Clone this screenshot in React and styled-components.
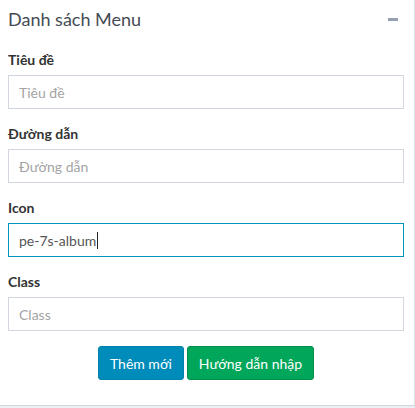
import React from "react";
import styled, { createGlobalStyle } from "styled-components";

const Global = createGlobalStyle`
  html, body { margin: 0; padding: 0; background: #ecf0f5; }
  body { font-family: "Lato", "Liberation Sans", sans-serif; }
  * { box-sizing: border-box; }
`;

const Panel = styled.div`
  width: 415px;
  background: #fff;
  border-right: 1px solid #dfe3e8;
  border-bottom: 1px solid #d2d6de;
  padding-bottom: 25px;
`;

const Header = styled.div`
  height: 44px;
  display: flex;
  align-items: flex-start;
  justify-content: space-between;
  padding: 8px 16px 0 8px;
`;

const Title = styled.h3`
  margin: 0;
  font-size: 18px;
  line-height: 22px;
  font-weight: 400;
  color: #444b55;
`;

const Collapse = styled.span`
  display: block;
  width: 10px;
  height: 3px;
  margin-top: 10px;
  background: #97a0b3;
`;

const Body = styled.div`
  padding: 6px 10px 0 8px;
`;

const Group = styled.div`
  margin-bottom: 15px;
`;

const Label = styled.label`
  display: block;
  font-size: 14px;
  font-weight: 700;
  line-height: 20px;
  color: #333;
  margin-bottom: 5px;
`;

const Input = styled.input`
  display: block;
  width: 100%;
  height: 34px;
  padding: 6px 10px;
  font: inherit;
  font-size: 14px;
  color: #555;
  border: 1px solid #d2d6de;
  border-radius: 0;
  outline: none;
  &::placeholder { color: #a4a4a4; }
`;

const FakeInput = styled.div`
  display: flex;
  align-items: center;
  height: 34px;
  padding: 0 10px;
  font-size: 14px;
  color: #555;
  border: 1px solid ${(p) => (p.$focused ? "#0093bf" : "#d2d6de")};
`;

const Caret = styled.span`
  display: inline-block;
  width: 1px;
  height: 17px;
  margin-left: 1px;
  background: #222;
`;

const Actions = styled.div`
  display: flex;
  justify-content: center;
  gap: 3px;
`;

const Button = styled.button`
  height: 34px;
  padding: 0 11px;
  font: inherit;
  font-size: 14px;
  color: #fff;
  border: 1px solid ${(p) => (p.$variant === "success" ? "#008d4c" : "#0082ad")};
  border-radius: 3px;
  background: ${(p) => (p.$variant === "success" ? "#00a65a" : "#008cba")};
  cursor: pointer;
`;

export default function App() {
  return (
    <>
      <Global />
      <Panel>
        <Header>
          <Title>Danh sách Menu</Title>
          <Collapse />
        </Header>
        <Body>
          <Group>
            <Label>Tiêu đề</Label>
            <Input placeholder="Tiêu đề" />
          </Group>
          <Group>
            <Label>Đường dẫn</Label>
            <Input placeholder="Đường dẫn" />
          </Group>
          <Group>
            <Label>Icon</Label>
            <FakeInput $focused>
              pe-7s-album
              <Caret />
            </FakeInput>
          </Group>
          <Group>
            <Label>Class</Label>
            <Input placeholder="Class" />
          </Group>
          <Actions>
            <Button>Thêm mới</Button>
            <Button $variant="success">Hướng dẫn nhập</Button>
          </Actions>
        </Body>
      </Panel>
    </>
  );
}
